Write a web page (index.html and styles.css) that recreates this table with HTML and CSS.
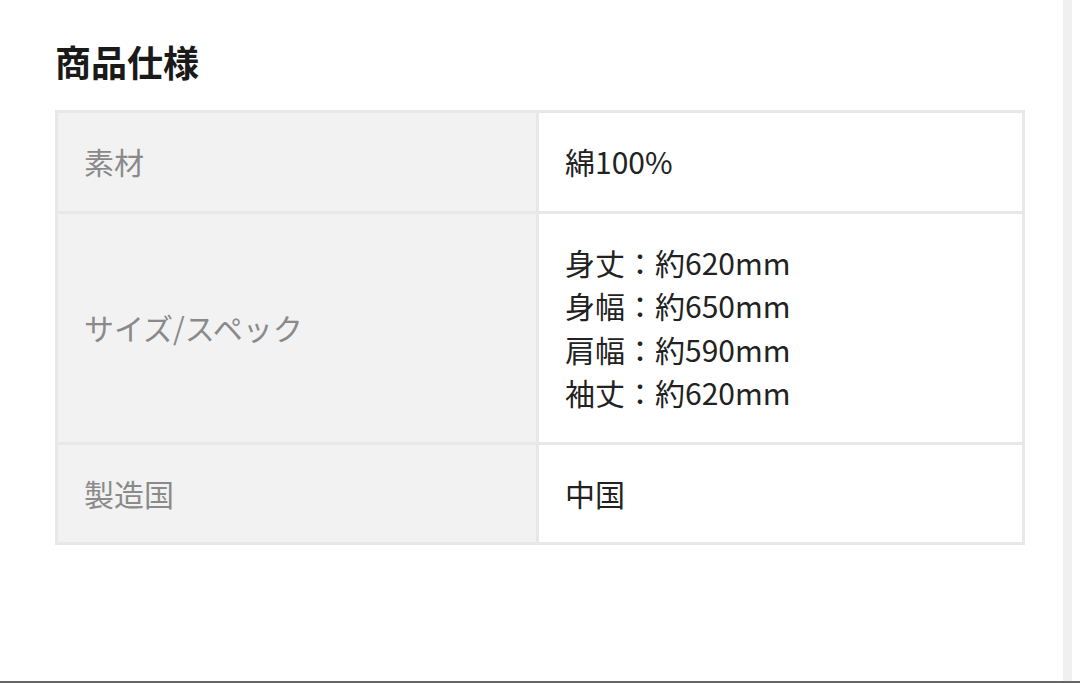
FILE: index.html
```html
<!DOCTYPE html>
<html lang="ja">
<head>
<meta charset="utf-8">
<title>商品仕様</title>
<link rel="stylesheet" href="styles.css">
</head>
<body>
<div class="screen">
  <div class="page">
    <main class="content">
      <h2 class="title">商品仕様</h2>
      <table class="spec">
        <tbody>
          <tr>
            <th>素材</th>
            <td>綿100%</td>
          </tr>
          <tr>
            <th>サイズ/スペック</th>
            <td>身丈：約620mm<br>身幅：約650mm<br>肩幅：約590mm<br>袖丈：約620mm</td>
          </tr>
          <tr>
            <th>製造国</th>
            <td>中国</td>
          </tr>
        </tbody>
      </table>
    </main>
    <div class="scrollbar"></div>
  </div>
  <div class="bottom-line"></div>
</div>
</body>
</html>
```

FILE: styles.css
```css
html, body {
  margin: 0;
  padding: 0;
  background: #ffffff;
}

body {
  font-family: "Noto Sans CJK JP", "Noto Sans", sans-serif;
}

.screen {
  width: 1080px;
  height: 683px;
  display: flex;
  flex-direction: column;
  overflow: hidden;
}

.page {
  flex: 1;
  display: flex;
  flex-direction: row;
  min-height: 0;
}

.content {
  flex: 1;
  padding: 40px 38px 0 55px;
}

.scrollbar {
  width: 9px;
  margin-right: 8px;
  background: #f0f0f0;
}

.bottom-line {
  height: 2px;
  background: #666666;
}

.title {
  margin: 0 0 28px 0;
  font-size: 36px;
  line-height: 42px;
  font-weight: 700;
  color: #1a1a1a;
  letter-spacing: 0;
}

.spec {
  width: 970px;
  border-collapse: collapse;
  table-layout: fixed;
  border: 3px solid #e8e8e8;
}

.spec th,
.spec td {
  border: 3px solid #e8e8e8;
  padding: 27px 26px;
  font-size: 30px;
  line-height: 43.5px;
  text-align: left;
  vertical-align: middle;
}

.spec th {
  width: 426px;
  background: #f2f2f2;
  color: #8a8a8a;
  font-weight: 400;
}

.spec td {
  background: #ffffff;
  color: #222222;
  font-weight: 400;
}
```
